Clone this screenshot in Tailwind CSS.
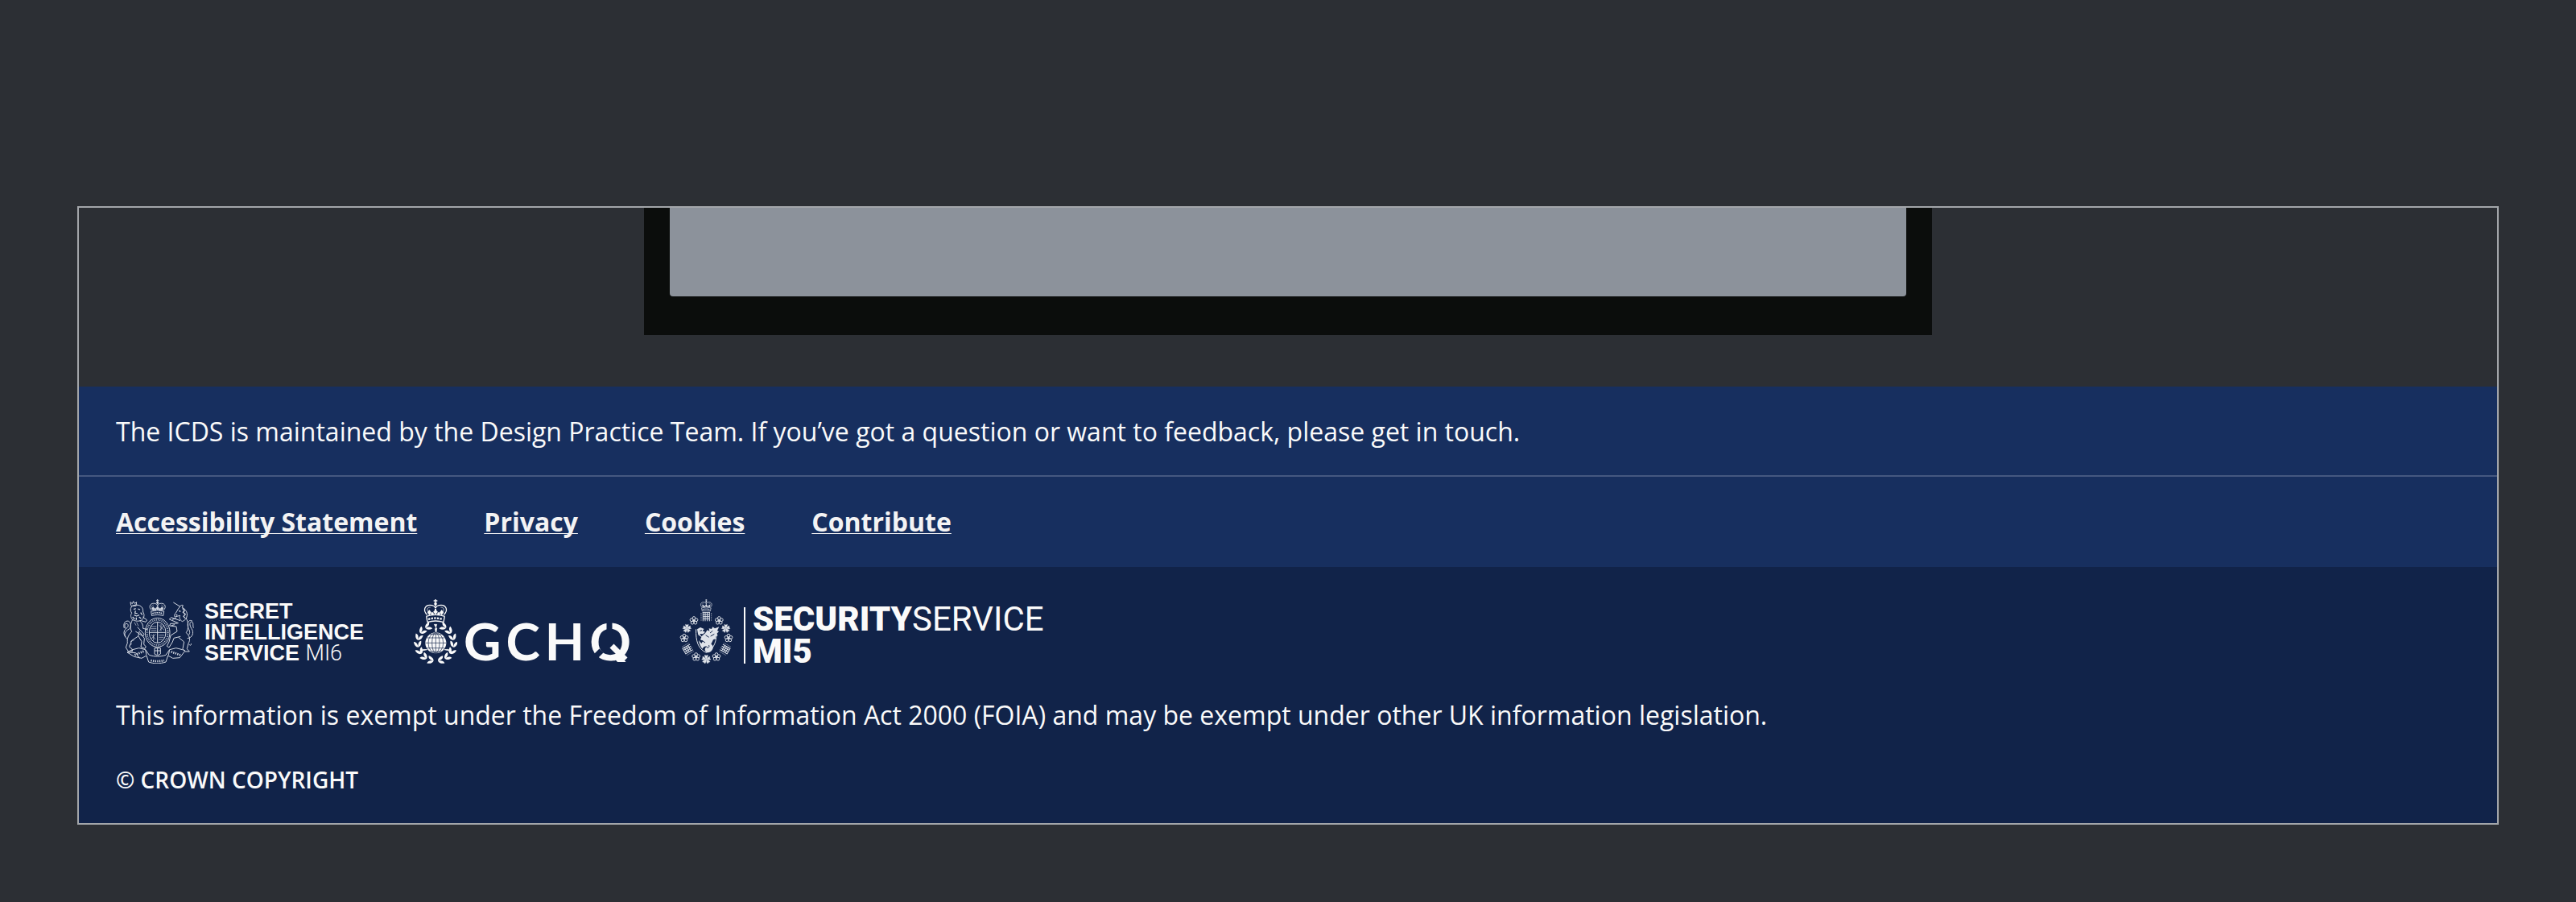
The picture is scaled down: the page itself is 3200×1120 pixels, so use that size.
<!DOCTYPE html>
<html lang="en">
<head>
<meta charset="utf-8">
<title>ICDS footer</title>
<script src="https://cdn.jsdelivr.net/npm/@tailwindcss/browser@4"></script>
</head>
<body class="min-h-screen bg-[#2c2f34] px-24 pt-64 pb-24 font-['Open_Sans',sans-serif] text-[32px] leading-12 text-[#fafafa]">

<!-- Shared emblem parts -->
<svg class="hidden" aria-hidden="true">
  <symbol id="crown" viewBox="0 0 90 90" overflow="visible">
    <g fill="none" stroke="currentColor" stroke-width="4">
      <path d="M45 0v14M38 6h14"/>
      <path d="M14 58C-4 42 6 22 24 22c12 0 19 4 21 12 2-8 9-12 21-12 18 0 28 20 10 36"/>
      <path d="M20 50C10 40 14 30 26 30M70 50c10-10 6-20-6-20" stroke-width="2"/>
      <path d="M45 20v34" stroke-width="6" stroke-dasharray="5 3"/>
      <path d="M10 64q35-12 70 0M14 86q31-10 62 0M11 64l4 22M79 64l-4 22"/>
      <path d="M18 75q27-9 54 0" stroke-width="7" stroke-dasharray="7 4"/>
    </g>
    <g fill="currentColor">
      <circle cx="45" cy="17" r="5"/>
      <path d="M22 60l-7-11 7-9 7 9zM45 57l-8-10 8-9 8 9zM68 60l-7-11 7-9 7 9z"/>
      <circle cx="33" cy="54" r="5"/><circle cx="57" cy="54" r="5"/>
    </g>
  </symbol>
  <symbol id="leaf" viewBox="-20 -20 40 40" overflow="visible">
    <path fill="currentColor" d="M8 0C0 0-13-2-14-14-3-14 7-9 8 0zM8 0C7 9-3 14-14 14-13 2 0 0 8 0z"/>
  </symbol>
  <symbol id="rose" viewBox="-18 -18 36 36" overflow="visible">
    <g fill="none" stroke="currentColor" stroke-width="3">
      <circle cy="-10" r="6"/><circle cx="9.5" cy="-3" r="6"/><circle cx="6" cy="8" r="6"/><circle cx="-6" cy="8" r="6"/><circle cx="-9.5" cy="-3" r="6"/>
    </g>
    <circle r="4" fill="currentColor"/>
  </symbol>
  <symbol id="cinquefoil" viewBox="-18 -18 36 36" overflow="visible">
    <g fill="currentColor">
      <path id="petal" d="M0 0l-5-9-1-7 6 2 6-2-1 7z"/>
      <use href="#petal" transform="rotate(72)"/><use href="#petal" transform="rotate(144)"/><use href="#petal" transform="rotate(216)"/><use href="#petal" transform="rotate(288)"/>
    </g>
  </symbol>
  <symbol id="portcullis" viewBox="-22 -20 44 40" overflow="visible">
    <g fill="none" stroke="currentColor" stroke-width="3">
      <path d="M-14-15h28M-12-7h24M-12 1h24M-12 9h24M-12-15v33M-4-15v33M4-15v33M12-15v33"/>
      <path d="M-19-13v30M19-13v30" stroke-width="2" stroke-dasharray="4 3"/>
    </g>
  </symbol>
</svg>

<div class="border-2 border-[#a3a6aa]">
  <div class="flex justify-center pb-16">
    <div class="w-[1600px] bg-[#0b0d0c] px-8 pb-12">
      <div class="h-[110px] rounded-b bg-[#8c929b]"></div>
    </div>
  </div>

  <footer>
    <div class="bg-[#172f5f]">
      <p class="border-b-2 border-[#455880] px-[46px] pt-8 pb-[30px]">The ICDS is maintained by the Design Practice Team. If you’ve got a question or want to feedback, please get in touch.</p>
      <nav class="flex gap-[83px] px-[46px] py-8 font-bold text-[#f3f3f4]" aria-label="Footer">
        <a href="#accessibility" class="underline decoration-1 underline-offset-2 [text-decoration-skip-ink:none]">Accessibility Statement</a>
        <a href="#privacy" class="underline decoration-1 underline-offset-2 [text-decoration-skip-ink:none]">Privacy</a>
        <a href="#cookies" class="underline decoration-1 underline-offset-2 [text-decoration-skip-ink:none]">Cookies</a>
        <a href="#contribute" class="underline decoration-1 underline-offset-2 [text-decoration-skip-ink:none]">Contribute</a>
      </nav>
    </div>

    <div class="bg-[#112349] px-[46px] pt-10 pb-[30px]">
      <div class="flex items-start pl-2">
        <!-- Secret Intelligence Service -->
        <a href="#sis" class="flex w-[362px] gap-3">
          <svg class="h-20 w-[90px] text-[#d3d8e2]" viewBox="66 42 270 240" fill="none" stroke="currentColor" stroke-width="3" stroke-linejoin="round" aria-hidden="true">
            <use href="#crown" x="162" y="42" width="70" height="64"/>
            <!-- garter and shield -->
            <ellipse cx="197" cy="166" rx="46" ry="54"/>
            <ellipse cx="197" cy="166" rx="39" ry="47" stroke-width="5" stroke-dasharray="3 4"/>
            <ellipse cx="197" cy="166" rx="31" ry="39"/>
            <path d="M197 127v78M166 166h62"/>
            <path d="M173 144h20M171 152h22M173 159h20M202 138l20 20M222 138l-18 22M210 135v26M174 174l16 18M190 172l-16 18M182 172v24M202 176h20M202 184h18M202 192h14" stroke-width="2"/>
            <!-- lion -->
            <path d="M98 65l-2-12 7 6 4-9 5 8 7-5-2 13M98 67h20"/>
            <path d="M100 70c-5 8-4 17 1 24-6 8-3 18 3 24 10 7 26 8 36 0 8-8 9-20 3-28 1-11-3-20-12-24-10-4-23-4-31 4z"/>
            <path d="M108 80l8-3M124 78l8 3M115 85l-2 9 9 1M110 101l9 4 10-4M104 108l8 8M134 92l6 8M128 108l8 6M118 110v9" stroke-width="4"/>
            <path d="M104 118c-9 18-10 32-3 45M142 108l16 12-5 7-17-5M130 122c10 8 14 17 13 29l17 4M122 146l25 26-4 8-28-18M101 163c-13 12-18 26-16 42l-6 17 9 14h16l-2-9-10-7 9-24 24-16 5-20M126 180l12 20-3 20 15 6 4-7-8-9 2-22-16-22"/>
            <path d="M84 190C66 176 78 160 90 154c9-6 10-24-1-30-13-4-21 10-16 26M78 182c-12-14-4-28 6-34 6-5 4-16-3-15-10 0-6 15-1 20"/>
            <path d="M111 128l6 12M119 128l7 14M96 200l14-6M92 214l10-6" stroke-width="2"/>
            <!-- unicorn -->
            <path d="M256 54l26 16M280 70c4-6 8-7 12-5l-3 8c12 5 20 18 18 30-1 12-8 18-18 22-9-6-12-14-8-22-8 1-13 5-19 5-4-5-3-10 3-14 5-9 9-17 15-24z"/>
            <path d="M290 76l8 9-6 6 9 7-7 8 6 7M277 85l6 3M265 100l6 2" stroke-width="4"/>
            <path d="M282 122l-34-12-7 7 34 14M272 132l-27 1-3 8 25 3 3 18-24 15-6 24-8 16 8 5 13-21 5-14 25-6M303 112c11 18 10 40 1 55 14 13 16 26 8 40l-5 20 9 10h-16l-9-10 5-26-21-17"/>
            <path d="M308 188c20-2 26-22 16-36-9-14-8-26 1-26 8 4 2 14 6 23M314 174c8-10-2-20-4-31-3-17 7-27 17-19M314 210c5 6 10 4 8-3M252 118l14-6M249 140l12-3"/>
            <!-- ribbon -->
            <path d="M84 240l20-10 24-6 24 6 14 20c20 7 42 7 62 0l14-20 24-6 24 6 10 4-20 26-26 2-18-10-8 24c-22 7-44 7-64 0l-8-24-18 10-28-6zM152 230l4 20M242 230l-4 20M84 240l32 2 14 20"/>
            <path d="M112 250l34-14M248 238l34 12M172 270q25 6 50 0" stroke-width="8" stroke-dasharray="4 4"/>
            <path d="M186 224h22v22c-8 6-14 6-22 0zM197 224v24M186 234h22"/>
          </svg>
          <span class="pt-[2px] font-['Liberation_Sans',sans-serif] text-[27px] leading-[26px] font-bold">SECRET<br>INTELLIGENCE<br>SERVICE <span class="font-['Roboto',sans-serif] font-light">MI6</span></span>
        </a>

        <!-- GCHQ -->
        <a href="#gchq" class="flex w-[330px] gap-2">
          <svg class="h-20 w-[54px]" viewBox="72 42 162 240" fill="none" stroke="currentColor" aria-hidden="true">
            <use href="#crown" x="108" y="42" width="90" height="90"/>
            <g stroke="none" transform="translate(154 205)">
              <g id="wreath-right">
                <use href="#leaf" x="-20" y="-20" width="40" height="40" transform="rotate(28) translate(0 -67)"/>
                <use href="#leaf" x="-20" y="-20" width="40" height="40" transform="rotate(51) translate(0 -67)"/>
                <use href="#leaf" x="-20" y="-20" width="40" height="40" transform="rotate(74) translate(0 -67)"/>
                <use href="#leaf" x="-20" y="-20" width="40" height="40" transform="rotate(97) translate(0 -67)"/>
                <use href="#leaf" x="-20" y="-20" width="40" height="40" transform="rotate(120) translate(0 -67)"/>
                <use href="#leaf" x="-20" y="-20" width="40" height="40" transform="rotate(143) translate(0 -67)"/>
                <use href="#leaf" x="-20" y="-20" width="40" height="40" transform="rotate(166) translate(0 -67)"/>
              </g>
              <use href="#wreath-right" transform="scale(-1 1)"/>
            </g>
            <path d="M148 136l8 14-5 2 4 20 3-22-4-1 4-13zM122 230l-18 4-2 8-14-1 20-12zM186 230l18 4 2 8 14-1-20-12z" fill="currentColor" stroke-width="2"/>
            <circle cx="154" cy="205" r="39" fill="currentColor" stroke="none"/>
            <path d="M154 166v78M116 205h76M121 186h66M121 224h66M132 173h44M132 237h44" stroke="#112349" stroke-width="2"/>
            <ellipse cx="154" cy="205" rx="14" ry="38" stroke="#112349" stroke-width="2"/>
            <ellipse cx="154" cy="205" rx="28" ry="38" stroke="#112349" stroke-width="2"/>
          </svg>
          <span class="flex gap-1.5 pt-7 font-['Lato',sans-serif] text-[64px] leading-12 font-bold">
            <span>G</span><span>C</span><span>H</span><span class="relative">Q
              <!-- stencil cuts and short tail -->
              <svg class="absolute top-0 left-0 h-16 w-[60px]" viewBox="0 0 60 64" fill="none" aria-hidden="true">
                <path d="M30 50h30v14H30z" fill="#112349"/>
                <path d="M25 0v17M15 36L4 47" stroke="#112349" stroke-width="7"/>
                <path d="M28 30l17 17" stroke="currentColor" stroke-width="7"/>
              </svg>
            </span>
          </span>
        </a>

        <!-- Security Service -->
        <a href="#mi5" class="flex">
          <svg class="h-20 w-[67px] text-[#dfe3ea]" viewBox="42 42 201 240" fill="none" stroke="currentColor" aria-hidden="true">
            <use href="#crown" x="110" y="42" width="64" height="46"/>
            <use href="#portcullis" x="118" y="86" width="48" height="40"/>
            <use href="#rose" x="79" y="105" width="34" height="34"/>
            <use href="#rose" x="173" y="105" width="34" height="34"/>
            <use href="#cinquefoil" x="53" y="134" width="34" height="34"/>
            <use href="#cinquefoil" x="198" y="134" width="34" height="34"/>
            <use href="#rose" x="43" y="170" width="34" height="34"/>
            <use href="#rose" x="208" y="170" width="34" height="34"/>
            <use href="#portcullis" x="-22" y="-20" width="44" height="38" transform="translate(73 228) rotate(-120)"/>
            <use href="#portcullis" x="-22" y="-20" width="44" height="38" transform="translate(212 228) rotate(120)"/>
            <use href="#rose" x="87" y="240" width="34" height="34"/>
            <use href="#rose" x="163" y="240" width="34" height="34"/>
            <use href="#cinquefoil" x="124" y="248" width="36" height="36"/>
            <path d="M104 154c-2 44 8 74 38 87 30-13 40-43 38-87" stroke-width="3"/>
            <path d="M108 154l12-7 14 6-6 7 10 4-8 8-12-1 6 10 14-12 8-12 8 4-2-10 10 2 4-8 8 6 16-6-7 14 6 4-8 7 4 7-9 5 3 7-11 4-8 16c8 6 10 14 4 22-4 8-14 12-22 8-8-6-6-18 4-20-8-3-14-1-18 8-8-8-12-20-14-32l10 12 6-10-10-4 4-10-12-8z" fill="currentColor" stroke="none"/>
            <path d="M144 222c8 2 11-4 7-9M140 176l12 8M156 168l10-8M158 180l14-8M126 196l12 8M126 158l-8 2" stroke="#112349" stroke-width="3"/>
          </svg>
          <span class="mt-[10px] ml-[13px] h-[70px] border-l-2 pl-[9px] font-['Roboto',sans-serif] text-[42px] leading-10 font-black"><span class="-mt-[5px] block">SECURITY<span class="font-normal">SERVICE</span><br>MI5</span></span>
        </a>
      </div>
      <p class="mt-10">This information is exempt under the Freedom of Information Act 2000 (FOIA) and may be exempt under other UK information legislation.</p>
      <p class="mt-8 text-[28px] font-semibold">© CROWN COPYRIGHT</p>
    </div>
  </footer>
</div>
</body>
</html>
